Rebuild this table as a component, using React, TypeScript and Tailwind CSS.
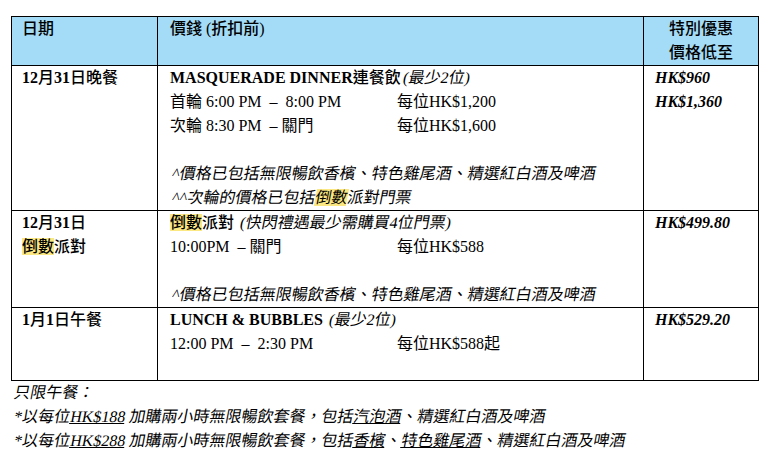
const FONT = { fontFamily: '"Liberation Serif", "Noto Sans CJK TC", serif' };

function Hl({ children }: { children: React.ReactNode }) {
  return <span className="bg-[#fce883]">{children}</span>;
}

// CJK fonts have no italic face, so slant the text ourselves
function Slant({ children }: { children: React.ReactNode }) {
  return <span className="inline-block origin-bottom -skew-x-[11deg] whitespace-pre">{children}</span>;
}

export default function App() {
  return (
    <div className="bg-white w-[779px] h-[465px] pl-[11px] pt-[16px] text-black text-[16px] leading-6" style={FONT}>
      <table className="table-fixed w-[747px] border-collapse border border-black">
        <colgroup>
          <col className="w-[146px]" />
          <col className="w-[486px]" />
          <col className="w-[115px]" />
        </colgroup>
        <thead>
          <tr className="bg-[#a4dcf7] align-top">
            <th className="border border-black pl-[10px] text-left font-medium">日期</th>
            <th className="border border-black pl-[12px] text-left font-medium">價錢 (折扣前)</th>
            <th className="border border-black text-center font-medium">
              特別優惠
              <br />
              價格低至
            </th>
          </tr>
        </thead>
        <tbody>
          {/* 除夕晚餐 */}
          <tr className="align-top">
            <td className="border border-black pl-[10px] font-medium">
              <b>12</b>月<b>31</b>日晚餐
            </td>
            <td className="border border-black pl-[12px]">
              <div>
                <span className="font-bold">MASQUERADE DINNER</span>
                <span className="font-medium">連餐飲</span>
                <Slant>(最少2位)</Slant>
              </div>
              <div className="grid grid-cols-[227px_1fr]">
                <span className="whitespace-pre">首輪 6:00 PM  –  8:00 PM</span>
                <span>每位HK$1,200</span>
                <span className="whitespace-pre">次輪 8:30 PM  – 關門</span>
                <span>每位HK$1,600</span>
              </div>
              <div className="h-6" />
              <div>
                <Slant>^價格已包括無限暢飲香檳、特色雞尾酒、精選紅白酒及啤酒</Slant>
              </div>
              <div>
                <Slant>
                  ^^次輪的價格已包括<Hl>倒數</Hl>派對門票
                </Slant>
              </div>
            </td>
            <td className="border border-black pl-[11px] font-bold italic">
              <div>HK$960</div>
              <div>HK$1,360</div>
            </td>
          </tr>

          {/* 倒數派對 */}
          <tr className="align-top">
            <td className="border border-black pl-[10px] font-medium">
              <div>
                <b>12</b>月<b>31</b>日
              </div>
              <div>
                <Hl>倒數</Hl>派對
              </div>
            </td>
            <td className="border border-black pl-[12px]">
              <div>
                <span className="font-medium">
                  <Hl>倒數</Hl>派對
                </span>{' '}
                <Slant>(快閃禮遇最少需購買4位門票)</Slant>
              </div>
              <div className="grid grid-cols-[227px_1fr]">
                <span className="whitespace-pre">10:00PM  – 關門</span>
                <span>每位HK$588</span>
              </div>
              <div className="h-6" />
              <div>
                <Slant>^價格已包括無限暢飲香檳、特色雞尾酒、精選紅白酒及啤酒</Slant>
              </div>
            </td>
            <td className="border border-black pl-[11px] font-bold italic">HK$499.80</td>
          </tr>

          {/* 元旦午餐 */}
          <tr className="align-top">
            <td className="border border-black pl-[10px] font-medium">
              <b>1</b>月<b>1</b>日午餐
            </td>
            <td className="border border-black pl-[12px]">
              <div>
                <span className="font-bold">LUNCH &amp; BUBBLES</span>{' '}
                <Slant>(最少2位)</Slant>
              </div>
              <div className="grid grid-cols-[227px_1fr]">
                <span className="whitespace-pre">12:00 PM  –  2:30 PM</span>
                <span>每位HK$588起</span>
              </div>
              <div className="h-6" />
            </td>
            <td className="border border-black pl-[11px] font-bold italic">HK$529.20</td>
          </tr>
        </tbody>
      </table>

      <div className="pl-px">
        <div>
          <Slant>只限午餐：</Slant>
        </div>
        <div>
          <Slant>
            *以每位<span className="underline">HK$188</span> 加購兩小時無限暢飲套餐，包括<span className="underline">汽泡酒</span>、精選紅白酒及啤酒
          </Slant>
        </div>
        <div>
          <Slant>
            *以每位<span className="underline">HK$288</span> 加購兩小時無限暢飲套餐，包括<span className="underline">香檳</span>、<span className="underline">特色雞尾酒</span>、精選紅白酒及啤酒
          </Slant>
        </div>
      </div>
    </div>
  );
}
